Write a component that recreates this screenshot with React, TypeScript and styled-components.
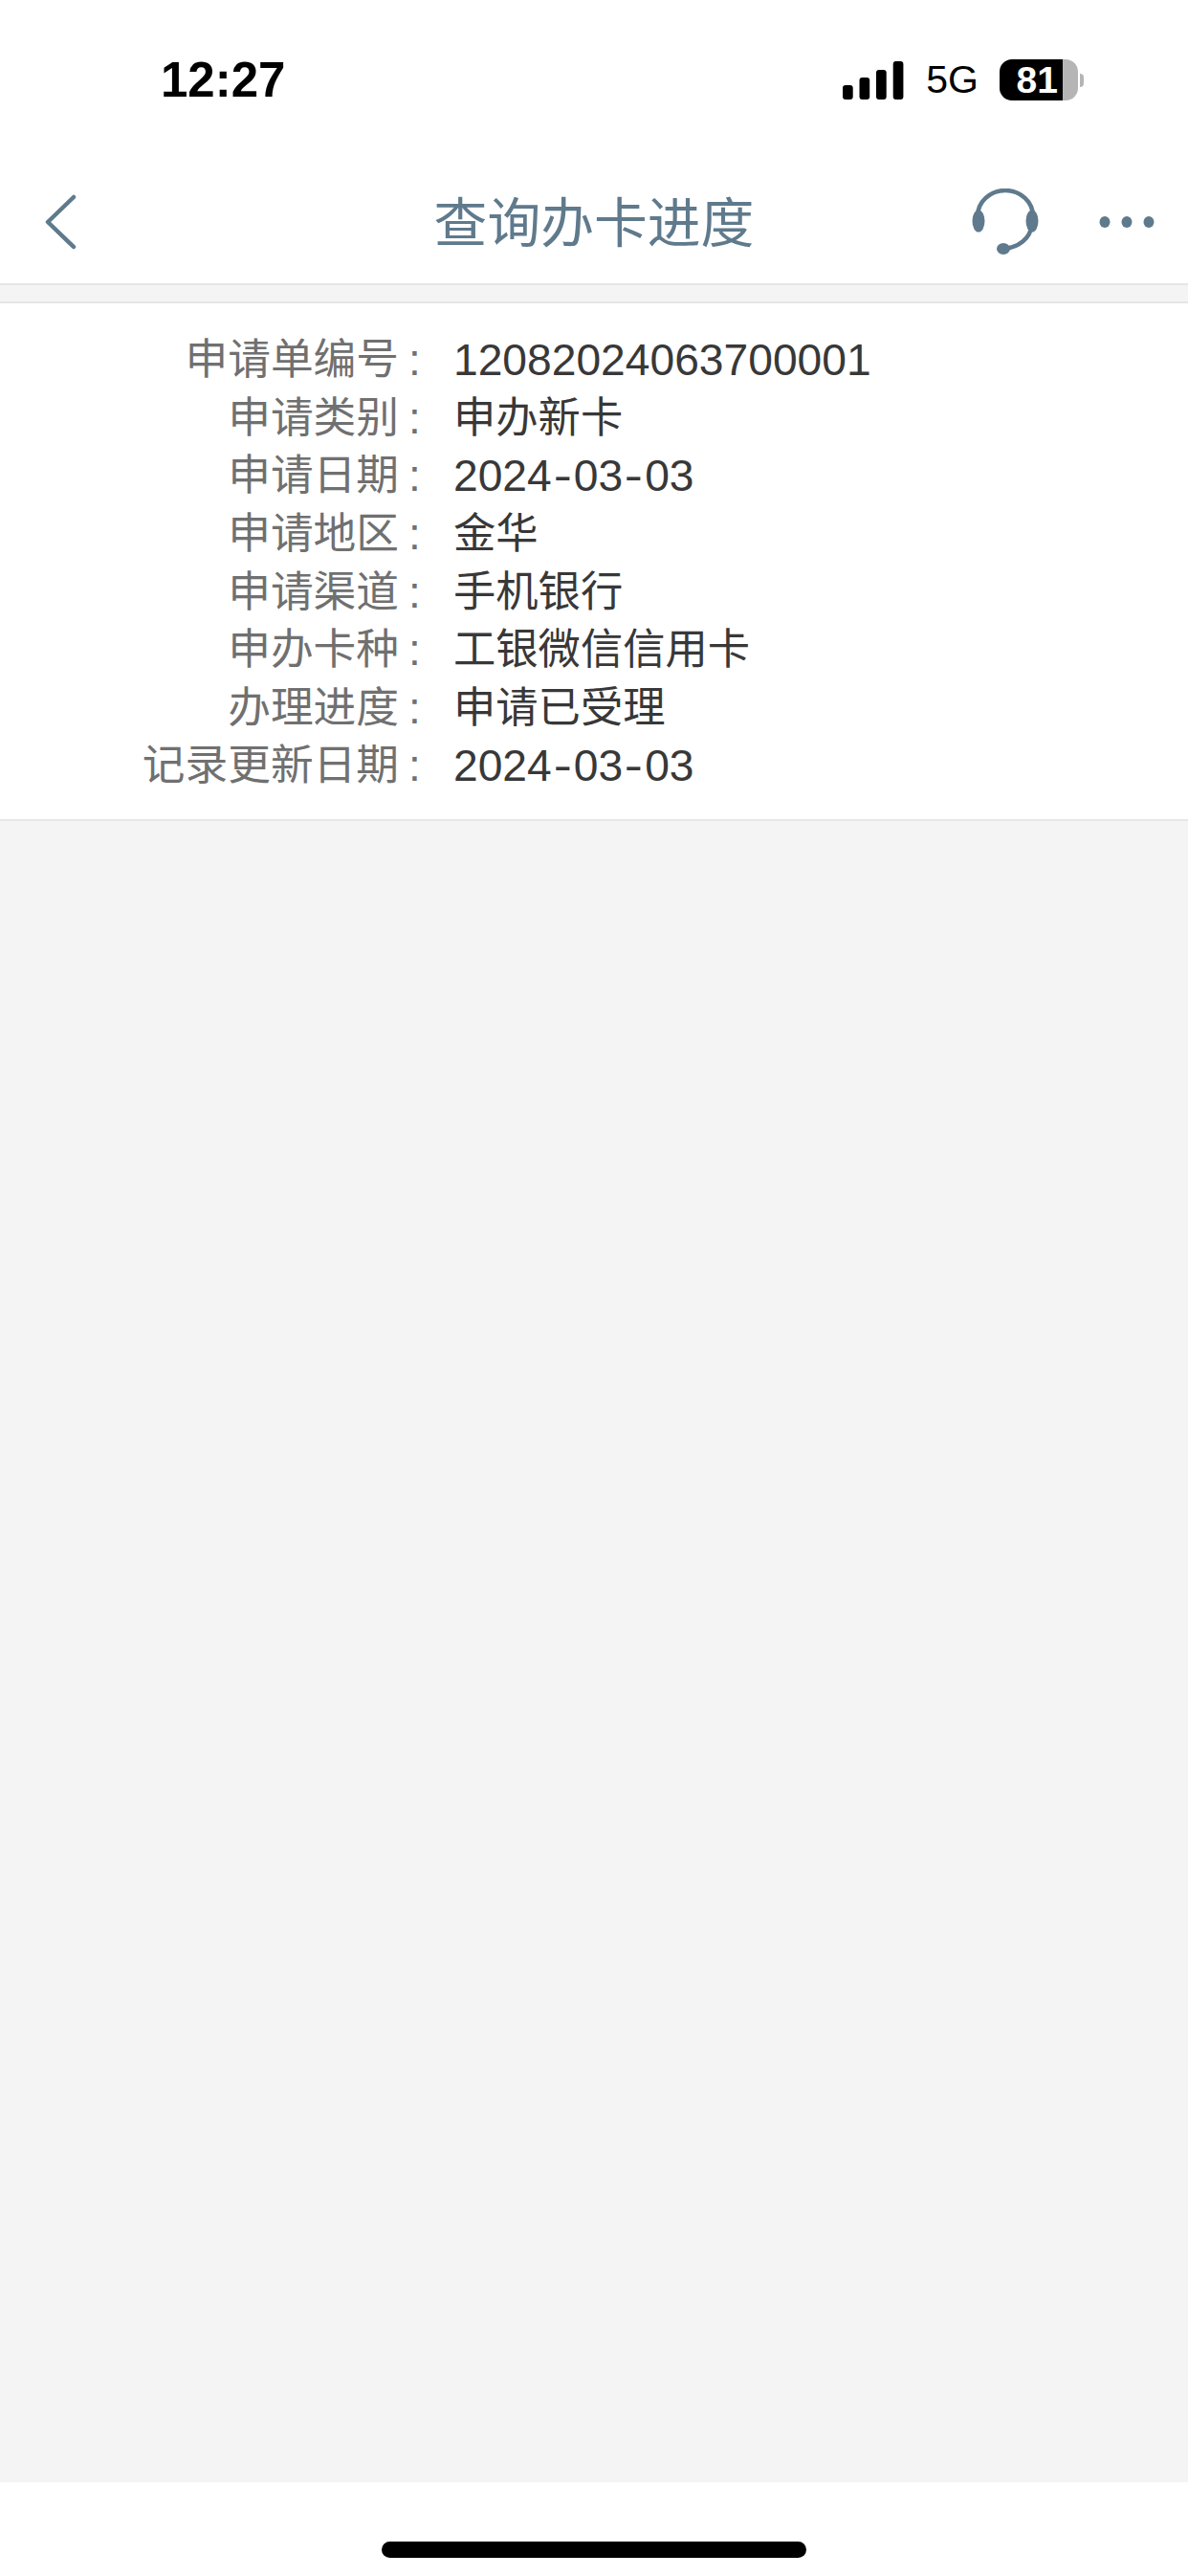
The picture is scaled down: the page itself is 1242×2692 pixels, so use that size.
import React from "react";
import styled, { createGlobalStyle } from "styled-components";

const Global = createGlobalStyle`
  html, body { margin: 0; padding: 0; background: #fff; }
`;
const CJK = `"Liberation Sans", "Noto Sans CJK SC", sans-serif`;

const Page = styled.div`
  width: 1242px;
  height: 2692px;
  display: flex;
  flex-direction: column;
  background: #f4f4f4;
  font-family: ${CJK};
  overflow: hidden;
`;
const StatusBar = styled.div`
  height: 168px;
  flex: none;
  background: #fff;
  box-sizing: border-box;
  padding: 62px 109px 0 168px;
  display: flex;
  justify-content: space-between;
  align-items: flex-start;
`;
const Time = styled.div`
  font: 700 51px/44px "Liberation Sans", sans-serif;
  color: #000;
`;
const StatusRight = styled.div`
  display: flex;
  align-items: center;
  height: 43px;
`;
const Network = styled.div`
  font: 400 41px/43px "Liberation Sans", sans-serif;
  color: #000;
  margin: 0 22px 0 23px;
`;
const Battery = styled.div`
  display: flex;
  align-items: center;
`;
const BatteryFill = styled.div`
  width: 66px;
  height: 43px;
  box-sizing: border-box;
  padding-right: 5px;
  background: #000;
  border-radius: 13px 0 0 13px;
  color: #fff;
  font: 700 39px/43px "Liberation Sans", sans-serif;
  text-align: right;
`;
const BatteryRest = styled.div`
  width: 16px;
  height: 43px;
  background: #b5b5b5;
  border-radius: 0 13px 13px 0;
`;
const BatteryCap = styled.div`
  width: 4px;
  height: 14px;
  margin-left: 2px;
  background: #b5b5b5;
  border-radius: 0 4px 4px 0;
`;
const NavBar = styled.div`
  height: 130px;
  flex: none;
  background: #fff;
  border-bottom: 2px solid #e6e6e6;
  box-sizing: border-box;
  display: grid;
  grid-template-columns: 1fr auto 1fr;
  align-items: center;
  padding: 0 35px;
`;
const BackButton = styled.div`
  margin-left: 11px;
  display: flex;
`;
const Title = styled.div`
  font-size: 55.8px;
  line-height: 70px;
  color: #5f7a8c;
  font-weight: 400;
  margin-top: 4px;
`;
const NavRight = styled.div`
  display: flex;
  align-items: center;
  justify-content: flex-end;
  gap: 62px;
`;
const Strip = styled.div`
  height: 17px;
  flex: none;
  background: #f4f4f4;
  border-bottom: 2px solid #e6e6e6;
`;
const Card = styled.div`
  flex: none;
  background: #fff;
  border-bottom: 2px solid #e6e6e6;
  height: 541px;
  box-sizing: border-box;
  padding-top: 29px;
`;
const Row = styled.div`
  display: grid;
  grid-template-columns: 417px 57px 1fr;
  height: 60.6px;
  align-items: center;
  font-size: 44.7px;
  line-height: 60px;
`;
const Label = styled.div`
  text-align: right;
  color: #707070;
  white-space: nowrap;
`;
const Colon = styled.div`
  color: #707070;
  padding-left: 10px;
  font-size: 46px;
`;
const Value = styled.div<{ $numeric: boolean }>`
  color: #383838;
  white-space: nowrap;
  font-size: ${(p) => (p.$numeric ? "46.2px" : "44.3px")};
  line-height: ${(p) => (p.$numeric ? "58px" : "60px")};
`;
const Hyphen = styled.span`
  display: inline-block;
  width: 23px;
  text-align: center;
  transform: scaleX(1.25);
`;
const Filler = styled.div`
  flex: 1;
`;
const Footer = styled.div`
  height: 98px;
  flex: none;
  background: #fff;
  display: flex;
  justify-content: center;
  padding-top: 62px;
  box-sizing: border-box;
`;
const HomeBar = styled.div`
  width: 444px;
  height: 17px;
  background: #000;
  border-radius: 9px;
`;

const rows = [
  ["申请单编号", "12082024063700001"],
  ["申请类别", "申办新卡"],
  ["申请日期", "2024-03-03"],
  ["申请地区", "金华"],
  ["申请渠道", "手机银行"],
  ["申办卡种", "工银微信信用卡"],
  ["办理进度", "申请已受理"],
  ["记录更新日期", "2024-03-03"],
];

const Signal = () => (
  <svg width="64" height="40" viewBox="0 0 64 40" fill="#000">
    <rect x="0" y="25" width="10.7" height="15" rx="3" />
    <rect x="17.5" y="17" width="10.7" height="23" rx="3" />
    <rect x="35" y="9" width="10.7" height="31" rx="3" />
    <rect x="52.7" y="0" width="10.7" height="40" rx="3" />
  </svg>
);
const Back = () => (
  <svg width="34" height="58" viewBox="0 0 34 58" fill="none" stroke="#5f7a8c" strokeWidth="4.5" strokeLinecap="round" strokeLinejoin="round">
    <path d="M31 3 L4 29 L31 55" />
  </svg>
);
const Headset = () => (
  <svg width="72" height="70" viewBox="0 0 72 70" fill="none">
    <path d="M7 33 V29 A29 27 0 0 1 65 29 V33" stroke="#5f7a8c" strokeWidth="4.5" />
    <path d="M63 40 C62 52 50 61 36 63" stroke="#5f7a8c" strokeWidth="4.5" />
    <ellipse cx="8" cy="34" rx="6.5" ry="11.5" fill="#5f7a8c" />
    <ellipse cx="64" cy="34" rx="6.5" ry="11.5" fill="#5f7a8c" />
    <ellipse cx="34" cy="63" rx="7" ry="6" fill="#5f7a8c" />
  </svg>
);
const Dots = () => (
  <svg width="58" height="14" viewBox="0 0 58 14" fill="#5f7a8c">
    <ellipse cx="6" cy="7" rx="5.5" ry="6" />
    <ellipse cx="29" cy="7" rx="5.5" ry="6" />
    <ellipse cx="52" cy="7" rx="5.5" ry="6" />
  </svg>
);

const ValueText = ({ text }: { text: string }) => {
  const parts = text.split("-");
  return (
    <Value $numeric={/^[\d-]+$/.test(text)}>
      {parts.map((part, i) => (
        <React.Fragment key={i}>
          {i > 0 && <Hyphen>-</Hyphen>}
          {part}
        </React.Fragment>
      ))}
    </Value>
  );
};

export default function App() {
  return (
    <Page>
      <Global />
      <StatusBar>
        <Time>12:27</Time>
        <StatusRight>
          <Signal />
          <Network>5G</Network>
          <Battery>
            <BatteryFill>81</BatteryFill>
            <BatteryRest />
            <BatteryCap />
          </Battery>
        </StatusRight>
      </StatusBar>
      <NavBar>
        <BackButton>
          <Back />
        </BackButton>
        <Title>查询办卡进度</Title>
        <NavRight>
          <Headset />
          <Dots />
        </NavRight>
      </NavBar>
      <Strip />
      <Card>
        {rows.map(([label, value]) => (
          <Row key={label}>
            <Label>{label}</Label>
            <Colon>:</Colon>
            <ValueText text={value} />
          </Row>
        ))}
      </Card>
      <Filler />
      <Footer>
        <HomeBar />
      </Footer>
    </Page>
  );
}
